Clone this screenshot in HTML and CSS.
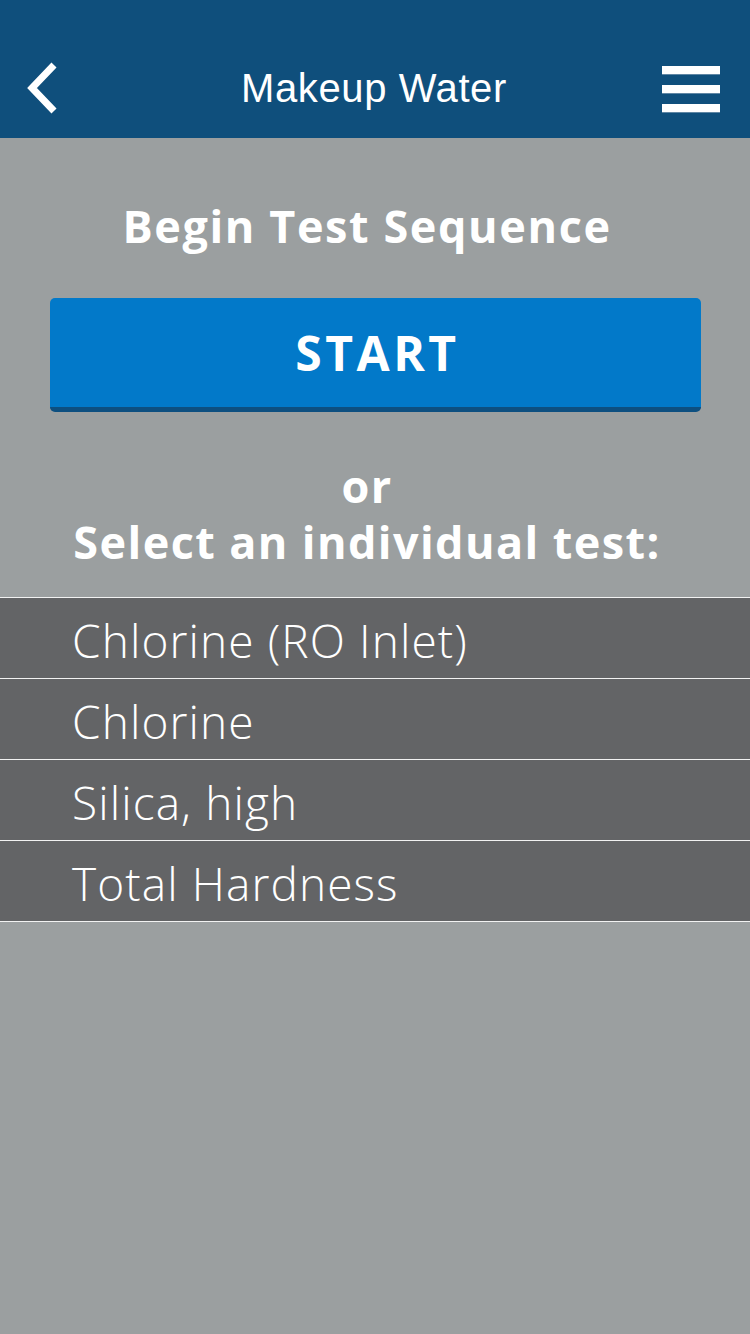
FILE: index.html
```html
<!DOCTYPE html>
<html lang="en">
<head>
<meta charset="utf-8">
<title>Makeup Water</title>
<link rel="stylesheet" href="styles.css">
</head>
<body>
<div class="screen">
  <header class="topbar">
    <button class="icon-btn back" aria-label="Back">
      <svg width="40" height="56" viewBox="0 0 40 56"><polyline points="32,5 10,28 32,51" fill="none" stroke="#fff" stroke-width="7" stroke-linecap="butt" stroke-linejoin="miter"/></svg>
    </button>
    <h1 class="title">Makeup Water</h1>
    <button class="icon-btn menu" aria-label="Menu">
      <span class="bar"></span><span class="bar"></span><span class="bar"></span>
    </button>
  </header>
  <main class="content">
    <h2 class="heading">Begin Test Sequence</h2>
    <button class="start">START</button>
    <p class="or">or<br>Select an individual test:</p>
  </main>
  <ul class="tests">
    <li class="test">Chlorine (RO Inlet)</li>
    <li class="test">Chlorine</li>
    <li class="test">Silica, high</li>
    <li class="test">Total Hardness</li>
  </ul>
</div>
</body>
</html>
```
FILE: styles.css
```css
html, body {
  margin: 0;
  padding: 0;
}
body {
  width: 750px;
  height: 1334px;
  background: #9b9fa0;
  font-family: "Open Sans", "Liberation Sans", sans-serif;
  color: #fff;
  overflow: hidden;
}
.screen {
  display: flex;
  flex-direction: column;
}
.topbar {
  height: 138px;
  background: #0f4f7c;
  display: grid;
  grid-template-columns: 1fr auto 1fr;
  align-items: center;
  padding: 38px 30px 0 22px;
  box-sizing: border-box;
}
.icon-btn {
  background: none;
  border: 0;
  padding: 0;
  display: flex;
  flex-direction: column;
}
.back {
  width: 40px;
  height: 56px;
  justify-self: start;
}
.title {
  margin: 0 0 0 6px;
  font-family: "Liberation Sans", Arial, sans-serif;
  font-weight: 400;
  font-size: 40px;
  letter-spacing: 0.6px;
}
.menu {
  width: 58px;
  gap: 10px;
  margin-top: 2px;
  justify-self: end;
}
.bar {
  display: block;
  height: 8px;
  background: #fff;
  border-bottom: 1px solid #5f86a4;
}
.content {
  display: flex;
  flex-direction: column;
  align-items: center;
  padding: 58px 49px 0 50px;
  height: 459px;
  box-sizing: border-box;
}
.heading {
  margin: 0 17px 0 0;
  font-size: 45px;
  font-weight: 700;
  line-height: 60px;
  letter-spacing: 1.6px;
}
.start {
  margin-top: 42px;
  width: 100%;
  height: 114px;
  background: #0279c9;
  border: 0;
  border-bottom: 5px solid #0d4f80;
  border-radius: 5px;
  color: #fff;
  font-family: "Open Sans", "Liberation Sans", sans-serif;
  font-weight: 700;
  font-size: 48px;
  letter-spacing: 3.5px;
  padding: 0 0 0 4px;
}
.or {
  margin: 46px 17px 0 0;
  text-align: center;
  font-size: 45px;
  font-weight: 700;
  line-height: 56px;
  letter-spacing: 1.4px;
}
.tests {
  list-style: none;
  margin: 0;
  padding: 0;
  border-top: 1px solid #f2f2f2;
}
.test {
  height: 81px;
  box-sizing: border-box;
  background: #636466;
  border-bottom: 1px solid #f2f2f2;
  padding: 4px 0 0 72px;
  display: flex;
  align-items: center;
  font-size: 46px;
  font-weight: 300;
  letter-spacing: 1.1px;
}
```
